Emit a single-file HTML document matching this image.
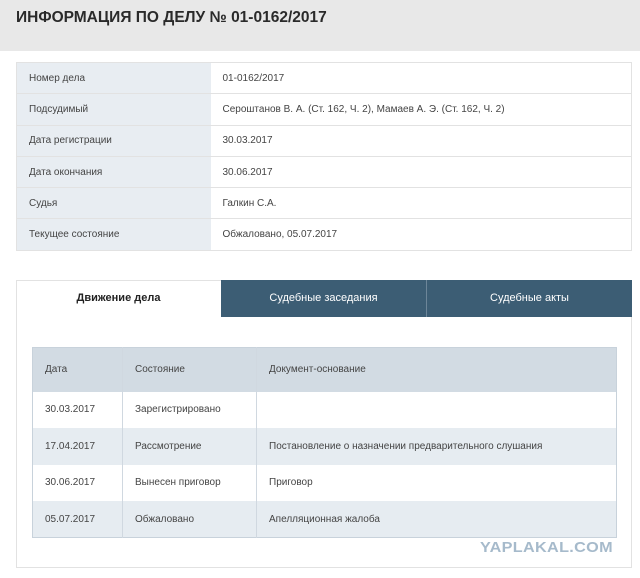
<!DOCTYPE html>
<html><head><meta charset="utf-8"><style>
*{margin:0;padding:0;box-sizing:border-box}
body{width:640px;height:578px;background:#fff;font-family:"Liberation Sans","DejaVu Sans",sans-serif;color:#333;position:relative;overflow:hidden}
.hdr{position:absolute;left:0;top:0;width:640px;height:51px;background:#e8e8e8}
.hdr h1{position:absolute;left:16px;top:9px;font-size:15.5px;font-weight:bold;color:#2a2a2a;letter-spacing:0px;font-family:"Liberation Sans",sans-serif}
.info{position:absolute;left:16px;top:62px;width:616px;border:1px solid #e2e2e2;border-collapse:collapse}
.info td{height:31.3px;font-size:10px;border-bottom:1px solid #e2e2e2;padding-left:12px;color:#444}
.info td.l{width:194px;background:#e8edf2}
.panel{position:absolute;left:16px;top:280px;width:616px;height:288px;border:1px solid #e2e2e2}
.tab{position:absolute;top:280px;height:37px;line-height:37px;text-align:center;font-size:11px}
.t1{left:16px;width:205px;color:#222;font-weight:bold}
.t2{left:221px;width:206px;background:#3c5d74;color:#fff;border-right:1px solid #6d8699}
.t3{left:427px;width:205px;background:#3c5d74;color:#fff}
.mv{position:absolute;left:32px;top:347px;width:585px;border-collapse:collapse;border:1px solid #c8d2db}
.mv td{font-size:10px;color:#444;padding-left:12px;border-left:1px solid #d0d8e0;height:36.6px}
.mv tr.h td{background:#d2dbe3;height:44px}
.mv tr.g td{background:#e6ecf1}
.wm{position:absolute;left:480px;top:539px;font-size:15px;font-weight:bold;color:#a6bacb;font-family:"Liberation Sans",sans-serif;letter-spacing:0.3px;transform:scaleX(1.08);transform-origin:left}
</style></head><body>
<div class="hdr"><h1>ИНФОРМАЦИЯ ПО ДЕЛУ № 01-0162/2017</h1></div>
<table class="info">
<tr><td class="l">Номер дела</td><td>01-0162/2017</td></tr>
<tr><td class="l">Подсудимый</td><td>Сероштанов В. А. (Ст. 162, Ч. 2), Мамаев А. Э. (Ст. 162, Ч. 2)</td></tr>
<tr><td class="l">Дата регистрации</td><td>30.03.2017</td></tr>
<tr><td class="l">Дата окончания</td><td>30.06.2017</td></tr>
<tr><td class="l">Судья</td><td>Галкин С.А.</td></tr>
<tr><td class="l">Текущее состояние</td><td>Обжаловано, 05.07.2017</td></tr>
</table>
<div class="panel"></div>
<div class="tab t1">Движение дела</div>
<div class="tab t2">Судебные заседания</div>
<div class="tab t3">Судебные акты</div>
<table class="mv">
<tr class="h"><td style="width:90px;border-left:none">Дата</td><td style="width:134px">Состояние</td><td>Документ-основание</td></tr>
<tr><td style="border-left:none">30.03.2017</td><td>Зарегистрировано</td><td></td></tr>
<tr class="g"><td style="border-left:none">17.04.2017</td><td>Рассмотрение</td><td>Постановление о назначении предварительного слушания</td></tr>
<tr><td style="border-left:none">30.06.2017</td><td>Вынесен приговор</td><td>Приговор</td></tr>
<tr class="g"><td style="border-left:none">05.07.2017</td><td>Обжаловано</td><td>Апелляционная жалоба</td></tr>
</table>
<div class="wm">YAPLAKAL.COM</div>
</body></html>
